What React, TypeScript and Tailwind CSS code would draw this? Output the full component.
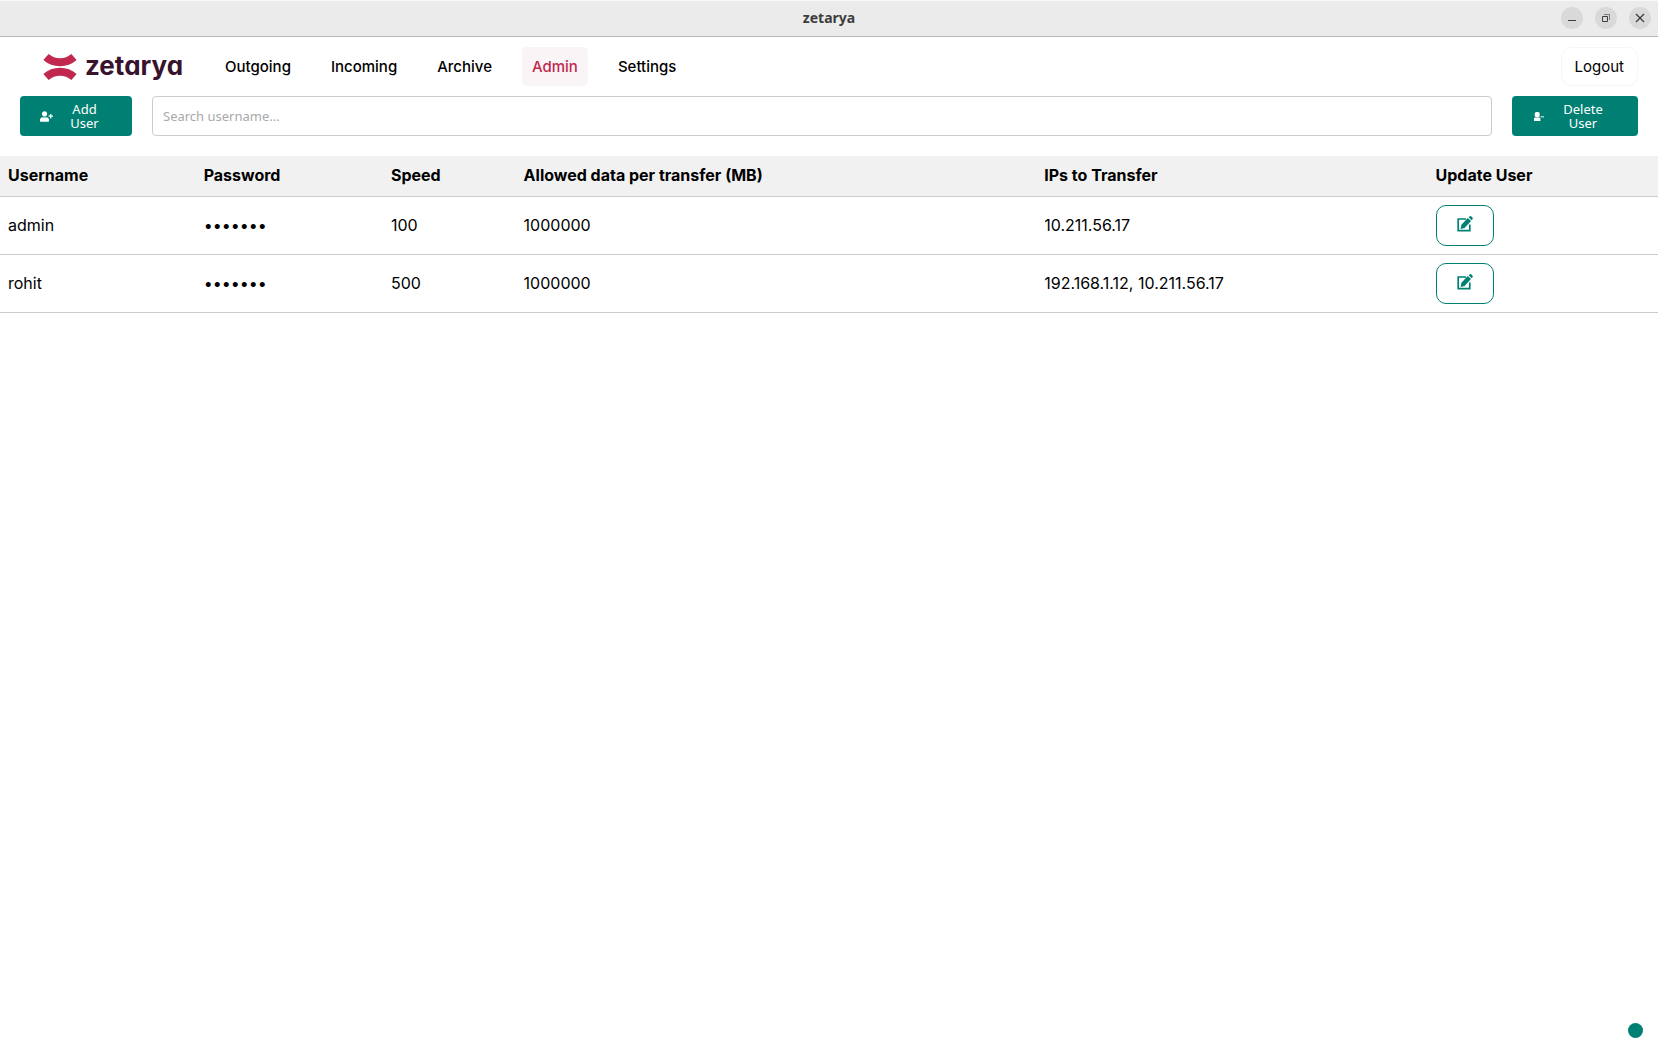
import { useState } from "react";
import { FaUserPlus } from "react-icons/fa";

const NAV_ITEMS = ["Outgoing", "Incoming", "Archive", "Admin", "Settings"];

const COLUMNS = [
  { label: "Username", width: "w-[11.8%]" },
  { label: "Password", width: "w-[11.3%]" },
  { label: "Speed", width: "w-[8%]" },
  { label: "Allowed data per transfer (MB)", width: "w-[31.4%]" },
  { label: "IPs to Transfer", width: "w-[23.6%]" },
  { label: "Update User", width: "w-[13.9%]" },
];

const USERS = [
  { username: "admin", speed: 100, allowed: 1000000, ips: ["10.211.56.17"] },
  { username: "rohit", speed: 500, allowed: 1000000, ips: ["192.168.1.12", "10.211.56.17"] },
];

function TitleBar() {
  const button = "flex h-[22px] w-[22px] items-center justify-center rounded-full bg-[#d9d9d9] text-[#3d3d3d]";
  return (
    <div className="grid h-[37px] grid-cols-[1fr_auto_1fr] items-center border-t border-b border-t-[#f8f8f8] border-b-[#b8b8b8] bg-[#ebebeb] px-[7px] pb-px">
      <h1 className="col-start-2 font-['Noto_Sans',sans-serif] text-sm font-bold text-[#3d3d3d]">zetarya</h1>
      <div className="flex justify-end gap-3">
        <button aria-label="Minimize" className={button}>
          <svg viewBox="0 0 22 22" className="h-[22px] w-[22px]">
            <path d="M7 13.5h8" stroke="currentColor" />
          </svg>
        </button>
        <button aria-label="Restore" className={button}>
          <svg viewBox="0 0 22 22" className="h-[22px] w-[22px]" fill="none" stroke="currentColor">
            <path d="M7.5 9.5h5v5h-5z" />
            <path d="M9 7.5h5.5V13" strokeOpacity="0.6" />
          </svg>
        </button>
        <button aria-label="Close" className={button}>
          <svg viewBox="0 0 22 22" className="h-[22px] w-[22px]">
            <path d="M7 7l8 8M15 7l-8 8" stroke="currentColor" strokeWidth="1.3" />
          </svg>
        </button>
      </div>
    </div>
  );
}

function Logo() {
  return (
    <a href="#" className="flex h-[39px] items-center gap-2">
      <svg viewBox="0 0 34 28" className="h-7 w-[34px]" fill="none" stroke="#c0284f" strokeWidth="8">
        <path d="M3 4C11 11 23 11 31 4" />
        <path d="M3 24C11 17 23 17 31 24" />
      </svg>
      <span className="pb-px text-[26px] leading-7 font-bold text-[#38132d] [font-feature-settings:'cv11']">zetarya</span>
    </a>
  );
}

function NavBar() {
  return (
    <header className="flex items-center px-5 pt-2.5 pb-2.5">
      <div className="w-[195px] pl-[23px]">
        <Logo />
      </div>
      <nav className="flex gap-5">
        {NAV_ITEMS.map((item) => (
          <a
            key={item}
            href="#"
            className={
              item === "Admin"
                ? "flex h-[39px] items-center rounded-[5px] bg-[#f9f4f6] px-2.5 pt-0.5 text-[15px] font-medium text-[#c0284f]"
                : "flex h-[39px] items-center rounded-[5px] px-2.5 pt-0.5 text-[15px] font-medium"
            }
          >
            {item}
          </a>
        ))}
      </nav>
      <button className="ml-auto h-[39px] rounded-[10px] border border-[#f9f4f6] px-[13px] pt-0.5 text-[15px]">
        Logout
      </button>
    </header>
  );
}

function UserMinusIcon() {
  return (
    <svg viewBox="0 0 10 9" className="h-[9px] w-2.5 shrink-0" fill="currentColor">
      <rect x="0.7" y="0" width="5" height="5.2" rx="1.8" />
      <path d="M0 9V7.2C0 6 .7 5.6 1.6 5.6h3.2c.9 0 1.6.4 1.6 1.6V9z" />
      <path d="M6.6 4.2H10v1.2H6.6z" opacity="0.8" />
    </svg>
  );
}

function EditIcon() {
  return (
    <svg viewBox="0 0 16 16" className="mb-0.5 h-4 w-4">
      <path d="M9 3H1.2v11.6h11.6V8.5" fill="none" stroke="#008073" strokeWidth="1.7" />
      <path d="M10.8 1.9l3.2 3.2-6.4 6.8-4 1 .8-4.2z" fill="#008073" />
      <path d="M11.7 1.3l.7-.7a1.4 1.4 0 0 1 2 0l.9.9a1.4 1.4 0 0 1 0 2l-.7.7z" fill="#008073" />
    </svg>
  );
}

export default function App() {
  const [search, setSearch] = useState("");
  const rows = USERS.filter((user) => user.username.includes(search));

  return (
    <div className="flex min-h-screen flex-col bg-white font-['Inter',sans-serif] text-base text-black">
      <TitleBar />
      <NavBar />

      <div className="flex gap-5 px-5 pb-5 font-['Noto_Sans',sans-serif]">
        <button className="flex h-10 w-28 items-center rounded-[4px] bg-[#008073] px-5 text-[13px] leading-[14px] text-white">
          <FaUserPlus className="h-[11px] w-[13px] shrink-0" />
          <span className="flex-1 pr-3 pl-4 text-center">Add User</span>
        </button>
        <input
          type="text"
          aria-label="Search username"
          placeholder="Search username..."
          value={search}
          onChange={(e) => setSearch(e.target.value)}
          className="h-10 min-w-0 flex-1 rounded-[4px] border border-[#cccccc] px-2.5 text-[13px] outline-none placeholder:text-[#a9a9a9]"
        />
        <button className="flex h-10 w-[126px] items-center rounded-[4px] bg-[#008073] pr-5 pl-[22px] text-[13px] leading-[14px] text-white">
          <UserMinusIcon />
          <span className="flex-1 pr-3 pl-4 text-center">Delete User</span>
        </button>
      </div>

      <table className="w-full table-fixed border-collapse text-left">
        <thead>
          <tr className="h-10 border-b border-[#cccccc] bg-[#f1f1f1]">
            {COLUMNS.map((column) => (
              <th key={column.label} className={`${column.width} px-2 pb-0.5 font-bold`}>
                {column.label}
              </th>
            ))}
          </tr>
        </thead>
        <tbody>
          {rows.map((user) => (
            <tr key={user.username} className="h-[58px] border-b border-[#cccccc]">
              <td className="px-2">{user.username}</td>
              <td className="px-2">•••••••</td>
              <td className="px-2">{user.speed}</td>
              <td className="px-2">{user.allowed}</td>
              <td className="px-2">{user.ips.join(", ")}</td>
              <td className="px-2">
                <button
                  aria-label={`Update ${user.username}`}
                  className="flex h-[41px] w-[58px] items-center justify-center rounded-[10px] border border-[#008073]"
                >
                  <EditIcon />
                </button>
              </td>
            </tr>
          ))}
        </tbody>
      </table>

      <div className="mt-auto flex justify-end px-[15px] pb-[15px]">
        <span className="h-[15px] w-[15px] rounded-full bg-[#008073]" />
      </div>
    </div>
  );
}
